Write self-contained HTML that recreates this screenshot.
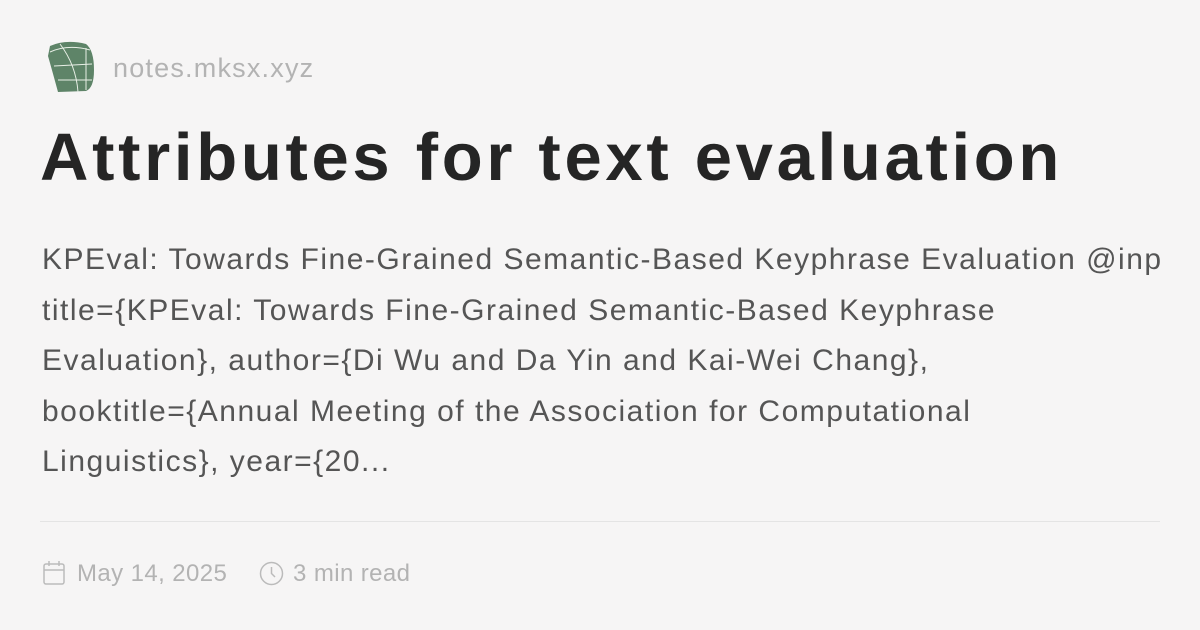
<!DOCTYPE html>
<html><head><meta charset="utf-8"><style>
body{margin:0;width:1200px;height:630px;background:#f6f5f5;font-family:"Liberation Sans",sans-serif;overflow:hidden;position:relative}
.logo{position:absolute;left:46px;top:40px}
.site{position:absolute;left:113px;top:53px;font-size:27px;color:#b3b3b3;letter-spacing:1.2px}
h1{position:absolute;left:40px;top:119px;margin:0;font-size:67px;font-weight:bold;color:#252525;letter-spacing:3.7px;white-space:nowrap}
.desc{position:absolute;left:42px;top:235px;width:1118px;height:250px;overflow:hidden;font-size:30px;line-height:50.5px;color:#555;letter-spacing:1.5px}
.desc div{white-space:nowrap}
hr{position:absolute;left:40px;top:521px;width:1120px;margin:0;border:0;border-top:1px solid #e4e4e4}
.meta{position:absolute;top:560px;font-size:24px;color:#b3b3b3;letter-spacing:0.4px}
</style></head><body>
<svg class="logo" width="50" height="54" viewBox="0 0 50 54"><path d="M4 6 Q20 -1 40 4 Q48 10 48 30 Q48 48 40 51 L12 52 Q6 30 2 16 Z" fill="#5e8468"/>
<g stroke="#e8efe6" stroke-width="1" fill="none"><path d="M4 12 Q22 4 44 10"/><path d="M8 26 L46 24"/><path d="M12 40 L46 40"/><path d="M14 4 Q30 25 32 52"/><path d="M40 8 L40 50"/></g></svg>
<div class="site">notes.mksx.xyz</div>
<h1>Attributes for text evaluation</h1>
<div class="desc"><div>KPEval: Towards Fine-Grained Semantic-Based Keyphrase Evaluation @inproceedings</div><div>title={KPEval: Towards Fine-Grained Semantic-Based Keyphrase</div><div>Evaluation}, author={Di Wu and Da Yin and Kai-Wei Chang},</div><div>booktitle={Annual Meeting of the Association for Computational</div><div>Linguistics}, year={20...</div></div>
<hr>
<svg style="position:absolute;left:43px;top:561px" width="22" height="24" viewBox="0 0 22 24" fill="none" stroke="#bbb" stroke-width="1.5"><rect x="1" y="3" width="20" height="20" rx="2"/><path d="M1 9H21M6 0V5M16 0V5"/></svg>
<div class="meta" style="left:77px">May 14, 2025</div>
<svg style="position:absolute;left:259px;top:561px" width="25" height="25" viewBox="0 0 25 25" fill="none" stroke="#bbb" stroke-width="1.5"><circle cx="12.5" cy="12.5" r="11"/><path d="M12.5 6V12.5L16 16"/></svg>
<div class="meta" style="left:293px">3 min read</div>
</body></html>
